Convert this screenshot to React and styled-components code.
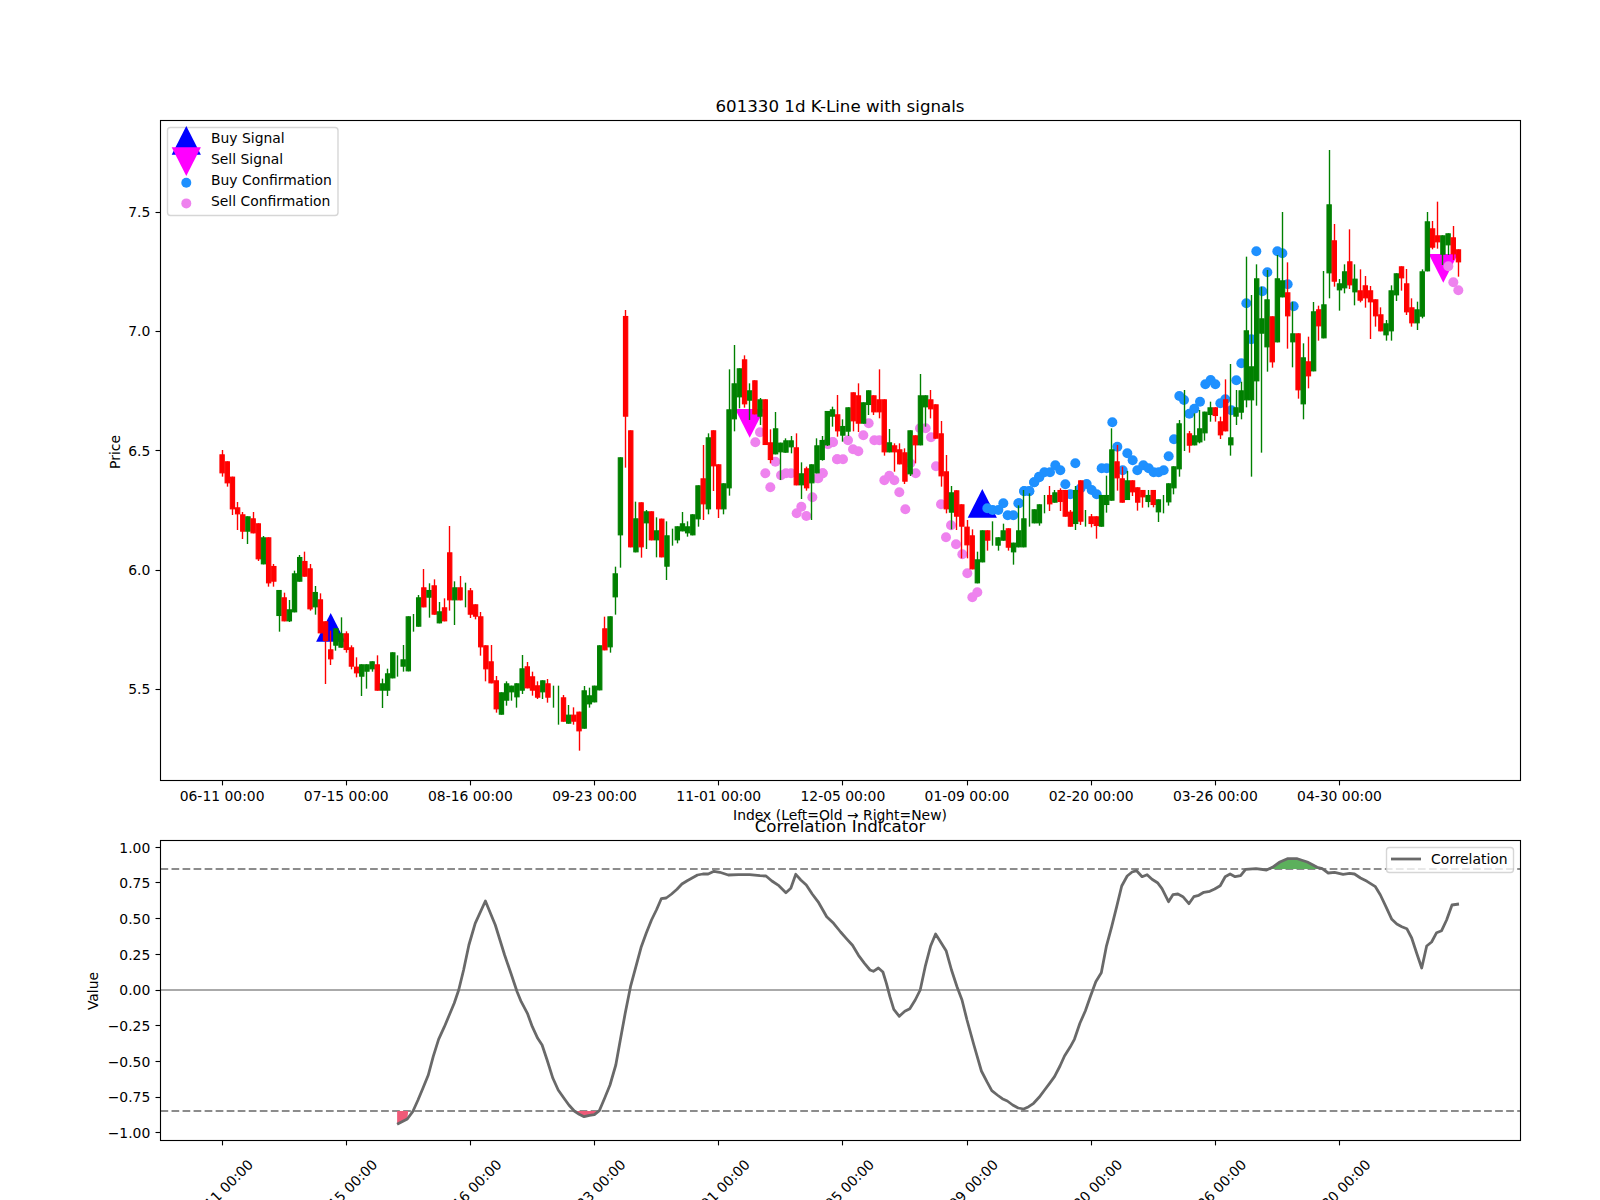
import React from 'react';
import styled, { createGlobalStyle } from 'styled-components';

const GlobalStyle = createGlobalStyle`
  html, body { margin: 0; padding: 0; background: #fff; }
  body { font-family: "DejaVu Sans", sans-serif; }
`;

const Figure = styled.main`
  display: flex;
  flex-direction: column;
  width: 1600px;
  height: 1200px;
  overflow: hidden;
  background: #fff;
`;
const ChartSvg = styled.svg`
  display: block;
  flex: none;
  width: 1600px;
  height: ${(p) => p.$h}px;
  overflow: visible;
`;
const Spine = styled.rect`
  fill: none;
  stroke: #000;
  stroke-width: 1.11px;
`;
const Tick = styled.line`
  stroke: #000;
  stroke-width: 1.11px;
`;
const TickLabel = styled.text`
  font: 13.9px "DejaVu Sans", sans-serif;
  fill: #000;
  text-anchor: ${(p) => p.$anchor || 'middle'};
`;
const AxisTitle = styled.text`
  font: 13.9px "DejaVu Sans", sans-serif;
  fill: #000;
  text-anchor: middle;
`;
const ChartTitle = styled.text`
  font: 16.67px "DejaVu Sans", sans-serif;
  fill: #000;
  text-anchor: middle;
`;
const LegendFrame = styled.rect`
  fill: #fff;
  fill-opacity: 0.8;
  stroke: #ccc;
  stroke-opacity: 0.8;
  stroke-width: 1.39px;
`;
const LegendLabel = styled.text`
  font: 13.9px "DejaVu Sans", sans-serif;
  fill: #000;
`;
const Wick = styled.line`
  stroke: ${(p) => p.$color};
  stroke-width: 1.39px;
`;
const Body = styled.rect`
  fill: ${(p) => p.$color};
  stroke: ${(p) => p.$color};
  stroke-width: 1.1px;
`;
const Marker = styled.polygon`
  fill: ${(p) => p.$color};
`;
const Dot = styled.circle`
  fill: ${(p) => p.$color};
`;
const Level = styled.line`
  stroke: ${(p) => (p.$dashed ? '#8c8c8c' : '#aaa')};
  stroke-width: 2px;
  stroke-dasharray: ${(p) => (p.$dashed ? '7.7 3.33' : 'none')};
`;
const CorrLine = styled.polyline`
  fill: none;
  stroke: #696969;
  stroke-width: 2.78px;
  stroke-linejoin: round;
`;
const CorrFill = styled.polygon`
  fill: ${(p) => p.$color};
`;

const L = 160.5, R = 1520.5;
const barX = (i) => 222.1 + 5.173 * i;
const snap = (v) => Math.floor(v) + 0.5;
const RED = '#ff0000', GREEN = '#008000';
const r = 'r', g = 'g';

const seg = (oy, rows) => rows.map(([c, bt, bb, wt, wb]) => ({
  color: c === 'r' ? RED : GREEN,
  bodyTop: oy + bt / 3, bodyBot: oy + bb / 3, wickTop: oy + wt / 3, wickBot: oy + wb / 3,
}));

const candles = [
  ...seg(430, [[r,73,130,60,140],[r,94,160,94,170],[r,140,238,140,255],[r,232,253,216,300],[r,253,305,246,327],[g,259,305,259,342],[r,265,310,246,310],[r,280,388,280,393],[g,322,403,318,403],[r,322,460,322,470],[r,408,455,402,470]]),
  ...seg(580, [[g,30,108,30,155],[r,52,124,38,124],[g,88,124,60,126],[g,-20,97,-28,97],[g,-69,5,-75,5],[r,-57,-10,-85,-10],[r,-35,88,-48,92],[g,36,82,18,104],[r,58,160,40,160],[r,124,183,124,312],[r,208,238,152,255],[g,145,197,145,212],[g,160,203,112,203],[r,160,210,154,218],[r,202,260,196,268],[r,260,280,232,292],[g,253,290,253,348],[g,253,275,253,326],[g,244,268,244,275],[r,253,332,226,332],[g,310,332,296,384],[g,280,332,266,348],[g,217,295,217,295],[g,226,226,226,290],[g,238,260,195,275],[g,109,274,109,274]]),
  ...seg(520, [[g,282,282,282,335],[g,232,320,225,320],[r,202,262,147,262],[g,210,233,190,293],[r,196,284,178,284],[g,274,310,246,310],[r,262,304,235,304],[r,97,241,18,272],[g,202,241,184,315],[r,202,241,168,241],[g,188,188,188,262],[r,211,284,204,294],[r,253,290,253,298],[r,289,382,276,407],[r,376,448,376,484],[r,424,490,375,490],[r,481,568,468,578],[g,517,584,517,584],[g,490,542,484,557],[g,497,517,497,542],[g,490,532,490,563],[g,445,512,405,522],[r,439,505,426,505],[r,469,512,455,527],[r,496,533,484,537],[g,481,517,481,537],[r,490,533,477,548],[g,497,497,497,563],[g,497,497,497,614],[r,532,605,525,605],[g,584,611,555,611],[r,584,605,562,614],[r,575,634,575,692],[g,511,626,498,626],[g,526,553,503,563],[g,497,547,497,547],[g,376,511,376,511],[r,325,391,290,391],[g,289,382,289,398],[g,160,232,140,284]]),
  ...seg(300, [[g,472,706,472,803],[r,48,350,30,503],[r,391,742,391,742],[g,655,757,605,757],[r,607,742,607,773],[g,634,670,630,747],[r,634,721,634,721],[g,691,721,652,772],[r,656,772,656,772],[g,706,800,664,840],[g,686,686,686,737],[g,679,721,679,730],[g,670,694,636,694],[g,679,700,664,710],[g,643,706,643,706],[g,556,658,556,680],[r,535,613,435,660],[g,412,628,400,643],[r,391,499,391,573],[r,493,628,493,654],[g,550,628,550,643],[g,328,565,208,587],[g,250,358,135,394],[g,205,292,205,325],[r,178,313,166,323],[g,271,302,250,360],[r,241,343,241,343],[g,298,350,294,375],[r,298,435,298,435],[r,427,480,388,490],[g,385,463,336,463],[g,428,457,428,540],[g,421,458,415,458],[g,421,442,408,460],[r,442,556,400,556],[g,520,556,487,597],[r,505,565,500,572],[g,493,550,493,660],[g,436,520,415,520]]),
  ...seg(360, [[g,240,300,228,302],[g,153,256,153,258],[g,148,170,140,200],[r,163,214,105,230],[g,198,227,178,245],[g,142,215,142,228],[r,97,184,97,214],[r,106,191,70,216],[g,127,191,127,191],[g,91,135,91,165],[r,106,157,106,165],[r,118,157,28,175],[r,118,277,118,287],[g,247,277,207,277],[r,256,277,250,335],[r,268,313,250,313],[r,277,365,265,372],[g,211,343,211,348],[r,226,256,226,310],[g,106,256,42,256],[g,106,142,106,200],[r,118,148,90,175],[r,133,236,133,236],[r,220,349,183,380],[r,334,448,285,460],[g,397,458,378,508],[r,391,470,391,510],[r,433,500,433,595],[r,500,556,480,595],[r,526,628,508,628],[g,598,670,575,670],[g,511,607,511,607],[r,511,542,511,572],[g,484,484,484,557],[g,532,557,532,572],[g,511,542,491,542],[r,505,563,505,572],[g,548,577,548,614],[g,511,562,436,562],[g,475,562,390,562],[g,400,400,400,500],[g,448,490,448,490],[g,433,490,433,497]]),
  ...seg(400, [[g,285,285,285,340],[r,285,313,258,333],[g,277,308,270,308],[r,270,306,265,333],[r,270,350,270,350],[r,335,380,330,380],[g,270,372,258,390],[r,241,365,241,375],[g,330,330,330,380],[r,349,372,342,382],[r,349,378,349,416],[g,285,380,285,380],[g,285,315,227,338],[g,148,302,85,302],[r,184,235,135,272],[r,235,308,200,308],[g,241,300,213,300],[r,241,277,241,288],[r,262,308,262,332],[r,270,292,270,323],[g,285,306,270,322],[r,270,315,270,322],[g,298,337,298,366],[g,285,285,285,340],[g,250,307,250,317],[g,199,265,199,283],[g,70,208,60,230],[g,-30,-30,-30,153],[r,100,137,93,158]]),
  ...seg(130, [[g,916,946,850,946],[g,895,937,840,940],[g,845,910,845,932],[g,832,855,815,875],[r,832,858,832,875],[r,874,916,860,927],[r,808,904,748,904],[g,922,946,702,977],[g,832,860,780,885],[g,781,848,755,868],[g,601,811,380,832],[g,709,811,495,1040],[g,445,754,403,827],[g,565,611,470,968],[g,508,652,420,725],[r,559,697,559,713],[g,445,637,375,637],[g,451,502,246,502],[r,487,559,397,656],[g,610,637,515,712],[r,610,781,610,806],[g,682,823,640,868],[r,694,739,620,775],[g,544,724,516,724],[r,538,589,527,632],[g,523,625,423,625],[g,223,430,60,505],[r,331,455,282,470],[g,460,481,447,542],[g,424,475,403,490],[r,394,466,298,477],[g,446,487,403,526],[r,481,512,418,517],[r,466,505,438,533],[r,481,517,468,627],[r,508,559,508,590],[r,553,604,532,604],[g,580,616,570,632],[g,481,604,466,632],[g,430,496,430,513],[r,409,445,409,482],[r,460,547,417,555],[r,532,580,505,590],[g,538,580,515,600],[g,424,560,418,565],[g,274,424,246,424],[r,295,353,273,358],[r,316,337,215,356],[g,316,374,316,405],[g,310,346,310,375],[r,322,373,288,390],[r,358,397,358,440]]),
];

const pts = (ox, oy, list) => list.map(([x, y]) => [ox + x / 3, oy + y / 3]);
const sellDots = [
  ...pts(600, 300, [[480,397],[466,427],[526,485],[496,520],[511,562],[543,526],[558,520],[573,520],[590,640],[604,620],[619,648],[637,592],[652,535],[668,520],[684,433],[699,427],[711,478]]),
  ...pts(820, 360, [[-5,355],[8,340],[22,250],[38,246],[52,298],[69,298],[84,241],[99,268],[115,274],[130,226],[146,190],[163,241],[178,241],[193,361],[208,347],[223,361],[238,397],[256,448],[271,310],[287,340],[300,205],[317,205],[333,232],[348,319],[363,433],[378,532],[393,496],[408,553],[427,583],[442,640],[457,712],[472,697]]),
  ...pts(1190, 130, [[775,409],[790,457],[805,481]]),
];
const buyDots = [
  ...pts(820, 360, [[502,445],[518,450],[535,450],[550,430],[563,466],[580,466],[595,430],[612,394],[628,394],[642,367],[657,350]]),
  ...pts(1020, 400, [[-3,310],[13,273],[28,273],[43,247],[58,232],[73,217],[90,217],[106,196],[121,211],[136,253],[151,283],[166,190],[182,265],[200,252],[215,270],[230,283],[245,205],[260,205],[277,67],[292,140],[308,211],[322,160],[338,181],[352,211],[370,196],[386,205],[401,217],[416,217],[431,211],[446,169],[462,118],[478,-12],[492,0],[508,41],[523,26],[540,5]]),
  ...pts(1190, 130, [[46,763],[62,750],[76,763],[91,820],[106,808],[124,841],[139,751],[154,700],[184,628],[169,520],[199,364],[217,484],[232,427],[262,364],[277,370],[293,463],[311,529]]),
];

const up = (x, y) => `${x},${y} ${x - 14.6},${y + 28.7} ${x + 14.6},${y + 28.7}`;
const down = (x, y) => `${x},${y} ${x - 14.6},${y - 28.7} ${x + 14.6},${y - 28.7}`;

const dateLabels = ['06-11 00:00', '07-15 00:00', '08-16 00:00', '09-23 00:00', '11-01 00:00', '12-05 00:00', '01-09 00:00', '02-20 00:00', '03-26 00:00', '04-30 00:00'];
const priceY = (p) => 331.4 + (7 - p) * 238.6;
const corrY = (v) => 990 - 142.7 * v;

const corrRaw = [
  ...[[755,1063],[778,1047],[790,1025],[802,990],[813,955],[825,915],[836,860],[848,808],[861,770],[872,735],[883,700],[893,660],[904,600],[916,525],[930,460],[953,393],[975,465],[996,555],[1010,610],[1024,665],[1033,695],[1047,730],[1058,770],[1070,805],[1080,825],[1091,870],[1104,925],[1116,960],[1129,985],[1140,1005],[1152,1023],[1163,1033],[1174,1040],[1186,1036],[1197,1034],[1208,1022],[1220,985],[1232,945],[1245,885],[1255,810],[1266,730],[1278,650],[1290,590],[1302,530],[1313,490],[1325,450],[1336,420],[1347,386],[1358,384],[1370,372],[1382,358],[1393,342],[1405,332],[1416,324],[1428,315],[1440,312],[1452,312],[1465,304],[1478,307],[1497,315],[1520,314],[1545,314]].map(([x, y]) => [60 + x / 2.24, 770 + y / 3]),
  ...[[0,317],[12,318],[24,333],[38,347],[52,368],[62,355],[72,313],[82,330],[93,345],[105,372],[118,398],[134,440],[148,460],[162,486],[175,508],[186,526],[198,556],[210,580],[221,600],[228,604],[238,594],[247,606],[254,640],[261,680],[269,718],[280,739],[291,724],[301,716],[312,690],[322,660],[332,590],[343,528],[353,492],[364,518],[374,542],[385,600],[396,650],[406,690],[416,750],[430,825],[445,903],[456,935],[466,962],[477,975],[487,986],[497,993],[508,1005],[519,1014],[530,1017],[540,1010],[550,1000],[561,982],[572,960],[582,940],[592,920],[603,888],[612,858],[623,832],[632,808],[643,760],[654,722],[664,680],[675,635],[686,608],[696,530],[707,470],[717,410],[727,348],[738,318],[748,306],[757,302],[768,320],[778,314],[788,328],[799,338],[808,356],[821,395],[830,374],[840,372],[850,380],[862,401],[872,380],[882,376],[892,367],[904,364],[914,357],[925,347],[935,320],[945,312],[955,320],[966,317],[976,298],[997,296],[1018,300],[1030,292],[1045,276],[1060,266],[1080,266],[1100,276],[1120,292],[1130,296],[1142,309],[1155,307],[1172,313],[1185,310],[1195,312],[1207,324],[1220,334],[1237,350],[1247,375],[1258,410],[1270,448],[1280,462],[1290,470],[1300,476],[1310,504],[1320,550],[1330,594],[1340,528],[1350,516],[1360,488],[1370,482],[1380,450],[1391,405],[1405,402]].map(([x, y]) => [760 + x / 2.01, 770 + y / 3]),
];
const toStr = (list) => list.map(([x, y]) => `${x.toFixed(1)},${y.toFixed(1)}`).join(' ');
const z9 = (x, y) => [60 + x / 2.24, 770 + y / 3];
const z10 = (x, y) => [760 + x / 2.01, 770 + y / 3];
const fills = [
  { color: '#ee5a78', p: [z9(755,1023), z9(780,1023), z9(778,1047), z9(755,1063)] },
  { color: '#ee5a78', p: [z9(1152,1023), z9(1208,1023), z9(1197,1034), z9(1186,1036), z9(1174,1040), z9(1163,1033)] },
  { color: '#5cb05c', p: [z10(1022,297), z10(1125,297), z10(1100,276), z10(1080,266), z10(1060,266), z10(1045,276), z10(1030,292)] },
];

function PriceLegend() {
  const rows = [['Buy Signal', 143.3], ['Sell Signal', 164.2], ['Buy Confirmation', 185], ['Sell Confirmation', 206]];
  return (
    <g>
      <LegendFrame x="167.5" y="127.5" width="170.5" height="88" rx="3" />
      <Marker $color="#0000ff" points={up(186.3, 126)} />
      <Marker $color="#ff00ff" points={down(186.3, 176)} />
      <Dot $color="#1e90ff" cx="186.3" cy="182.7" r="5" />
      <Dot $color="#ee82ee" cx="186.3" cy="203.4" r="5" />
      {rows.map(([t, y]) => <LegendLabel key={t} x="211" y={y}>{t}</LegendLabel>)}
    </g>
  );
}

function PriceChart() {
  return (
    <ChartSvg $h={810} viewBox="0 0 1600 810">
      <ChartTitle x="840" y="111.7">601330 1d K-Line with signals</ChartTitle>
      <Marker $color="#0000ff" points={up(330.7, 613)} />
      <Marker $color="#0000ff" points={up(982.3, 489)} />
      <Marker $color="#ff00ff" points={down(749.7, 437.8)} />
      <Marker $color="#ff00ff" points={down(1443.3, 282.7)} />
      {sellDots.map(([x, y], i) => <Dot key={`s${i}`} $color="#ee82ee" cx={x} cy={y} r="5" />)}
      {buyDots.map(([x, y], i) => <Dot key={`b${i}`} $color="#1e90ff" cx={x} cy={y} r="5" />)}
      {candles.map((c, i) => (
        <g key={i}>
          <Wick $color={c.color} x1={snap(barX(i))} x2={snap(barX(i))} y1={c.wickTop} y2={c.wickBot} />
          {c.bodyBot > c.bodyTop && (
            <Body $color={c.color} x={barX(i) - 2.15} y={c.bodyTop + 0.5} width="4.3" height={Math.max(c.bodyBot - c.bodyTop - 1, 0.5)} />
          )}
        </g>
      ))}
      <Spine x={L} y="120.5" width={R - L} height="660" />
      {[5.5, 6, 6.5, 7, 7.5].map((p) => (
        <g key={p}>
          <Tick x1={L - 5} x2={L} y1={snap(priceY(p))} y2={snap(priceY(p))} />
          <TickLabel $anchor="end" x="150.3" y={priceY(p) + 5}>{p.toFixed(1)}</TickLabel>
        </g>
      ))}
      {dateLabels.map((d, i) => (
        <g key={d}>
          <Tick x1={snap(barX(24 * i))} x2={snap(barX(24 * i))} y1="780.5" y2="785.4" />
          <TickLabel x={barX(24 * i)} y="801.4">{d}</TickLabel>
        </g>
      ))}
      <AxisTitle x="840" y="820">Index (Left=Old → Right=New)</AxisTitle>
      <AxisTitle transform="rotate(-90 120 452)" x="120" y="452">Price</AxisTitle>
      <PriceLegend />
    </ChartSvg>
  );
}

function IndicatorChart() {
  const vals = [1, 0.75, 0.5, 0.25, 0, -0.25, -0.5, -0.75, -1];
  return (
    <ChartSvg $h={390} viewBox="0 810 1600 390">
      <ChartTitle x="840" y="831.7">Correlation Indicator</ChartTitle>
      <Level x1={L} x2={R} y1={corrY(0)} y2={corrY(0)} />
      <Level $dashed x1={L} x2={R} y1={869} y2={869} />
      <Level $dashed x1={L} x2={R} y1={1111} y2={1111} />
      {fills.map((f, i) => <CorrFill key={i} $color={f.color} points={toStr(f.p)} />)}
      <CorrLine points={toStr(corrRaw)} />
      <Spine x={L} y="840.5" width={R - L} height="300" />
      {vals.map((v) => (
        <g key={v}>
          <Tick x1={L - 5} x2={L} y1={snap(corrY(v))} y2={snap(corrY(v))} />
          <TickLabel $anchor="end" x="150.3" y={corrY(v) + 5.4}>{(v < 0 ? '−' : '') + Math.abs(v).toFixed(2)}</TickLabel>
        </g>
      ))}
      {dateLabels.map((d, i) => (
        <g key={d}>
          <Tick x1={snap(barX(24 * i))} x2={snap(barX(24 * i))} y1="1140.5" y2="1145.4" />
          <TickLabel transform={`rotate(-45 ${barX(24 * i) - 1.5} 1192)`} x={barX(24 * i) - 1.5} y="1197">{d}</TickLabel>
        </g>
      ))}
      <AxisTitle transform="rotate(-90 98 991)" x="98" y="991">Value</AxisTitle>
      <LegendFrame x="1386.5" y="847.5" width="127" height="25" rx="3" />
      <CorrLine points="1391,859 1421,859" />
      <LegendLabel x="1431" y="864">Correlation</LegendLabel>
    </ChartSvg>
  );
}

export default function App() {
  return (
    <Figure>
      <GlobalStyle />
      <PriceChart />
      <IndicatorChart />
    </Figure>
  );
}
